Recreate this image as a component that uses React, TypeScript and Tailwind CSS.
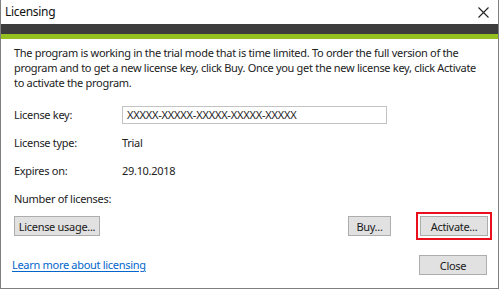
import React from "react";

interface ButtonProps {
  label: string;
  className?: string;
}

const Button: React.FC<ButtonProps> = ({ label, className = "" }) => {
  return (
    <button
      className={`h-[20px] border border-[#adadad] bg-[#e1e1e1] text-[11px] leading-none text-[#1a1a1a] ${className}`}
    >
      {label}
    </button>
  );
};

interface RowProps {
  label: string;
  children?: React.ReactNode;
}

const Row: React.FC<RowProps> = ({ label, children }) => {
  return (
    <div className="flex h-[28px] items-center">
      <div className="w-[108px] shrink-0">{label}</div>
      {children}
    </div>
  );
};

export default function App() {
  return (
    <div className="flex h-[289px] w-[499px] flex-col border-x border-b border-[#7f7f7f] bg-white font-['Noto_Sans',sans-serif] text-[11px] tracking-[-0.3px] text-[#222]">
      <div className="flex h-[24px] items-center justify-between pl-[4px] pr-[8px]">
        <span className="text-[12px] text-[#111]">Licensing</span>
        <svg width="11" height="11" viewBox="0 0 11 11" className="mr-[1px]">
          <path
            d="M0.5 0.5 L10.5 10.5 M10.5 0.5 L0.5 10.5"
            stroke="#222"
            strokeWidth="1.1"
          />
        </svg>
      </div>
      <div className="h-[10px] bg-[#3c3c3c]" />
      <div className="h-[5px] bg-[#94c11f]" />

      <div className="flex flex-1 flex-col pl-[13px] pr-[11px]">
        <p className="mt-[6px] whitespace-nowrap leading-[15px]">
          The program is working in the trial mode that is time limited. To
          order the full version of the
          <br />
          program and to get a new license key, click Buy. Once you get the new
          license key, click Activate
          <br />
          to activate the program.
        </p>

        <div className="mt-[11px] flex flex-col">
          <Row label="License key:">
            <div className="flex h-[18px] w-[265px] items-center border border-[#c3c3c3] pl-[4px] tracking-[-0.2px] text-[#222]">
              XXXXX-XXXXX-XXXXX-XXXXX-XXXXX
            </div>
          </Row>
          <Row label="License type:">Trial</Row>
          <Row label="Expires on:">29.10.2018</Row>
          <Row label="Number of licenses:" />
        </div>

        <div className="mr-[-5px] mt-[-1px] flex items-center">
          <Button label="License usage..." className="w-[86px]" />
          <div className="flex-1" />
          <Button label="Buy..." className="w-[43px]" />
          <div className="ml-[25px] border-2 border-[#e8101c] p-[2px]">
            <Button label="Activate..." className="block w-[68px]" />
          </div>
        </div>

        <div className="mt-[15px] flex items-center justify-between">
          <a
            className="ml-[-2px] text-[#0066cc] underline underline-offset-2"
            href="#"
          >
            Learn more about licensing
          </a>
          <Button label="Close" className="w-[68px]" />
        </div>
      </div>
    </div>
  );
}
